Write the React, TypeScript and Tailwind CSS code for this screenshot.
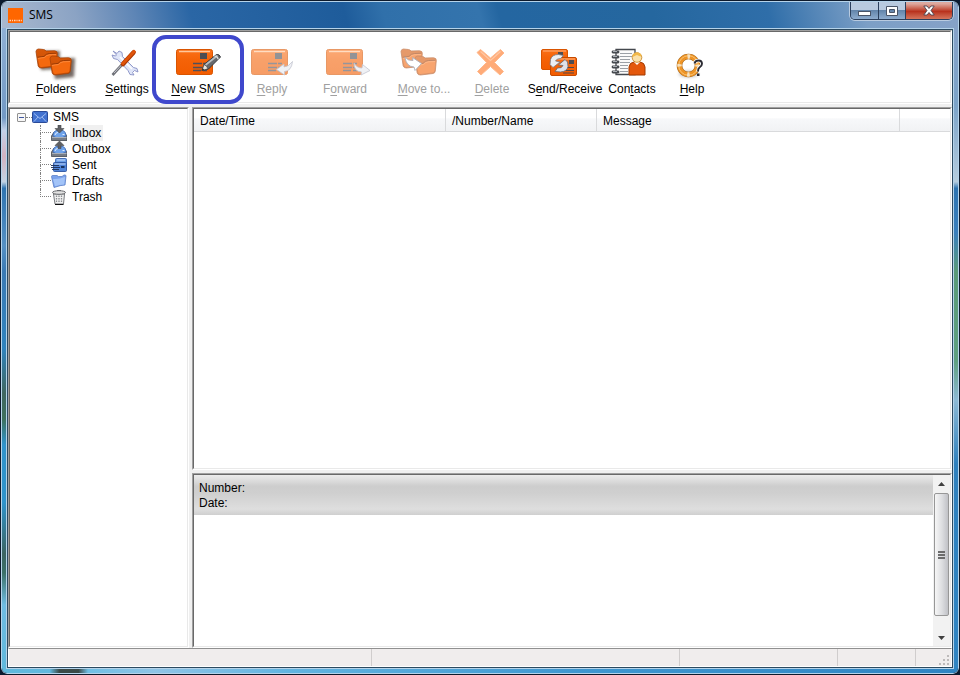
import type { ReactNode } from "react";
import clsx from "clsx";

interface ToolbarItem {
  id: string;
  label: string;
  // index of the underlined access key inside the label
  accessKey: number;
  width: string;
  icon: ReactNode;
  disabled?: boolean;
  highlighted?: boolean;
}

interface SunkenProps {
  className?: string;
  children?: ReactNode;
}

function Sunken({ className, children }: SunkenProps) {
  return (
    <div className={clsx("flex border border-t-[#a0a0a0] border-l-[#a0a0a0] border-r-white border-b-white", className)}>
      <div className="flex min-w-0 flex-1 flex-col border border-t-[#696969] border-l-[#696969] border-r-[#e9e9e9] border-b-[#e9e9e9] bg-white">
        {children}
      </div>
    </div>
  );
}

/* ---------- toolbar icons ---------- */

function Envelope({ x }: { x: number }) {
  return (
    <g transform={`translate(${x} 5)`}>
      <rect x="0.5" y="0.5" width="36" height="25" rx="2" fill="url(#orange)" stroke="#d95400" />
      <path d="M3 2.500H34" stroke="#ffc79c" strokeWidth="1.400" />
      <rect x="24" y="4" width="7" height="6" fill="#4d4d52" />
      <path d="M17 14.500h9m1 0h4M17 18.500h9m1 0h4M17 21.500h8m2 0h4" stroke="#50505a" strokeWidth="1.300" />
    </g>
  );
}

function FolderShape({ x, y }: { x: number; y: number }) {
  return (
    <g transform={`translate(${x} ${y})`}>
      <path
        d="M1 3.500Q1.300 1 3.500 1L8.500 1.500Q10 1.700 11 3L19.500 2.800Q22.500 3 22.300 5.500L21.300 16Q21 18.300 19 18.500L6.500 20Q4 20.200 3.200 18Z"
        fill="url(#folder)"
        stroke="#a84208"
        strokeWidth="0.800"
      />
      <path
        d="M2.500 9.500Q6.500 8.800 9 8.600Q11 6 14.500 5.800L21.500 5.500L20.500 15.500Q20.300 17.300 18.500 17.500L6.500 19Q4.800 19 4.300 17.500Z"
        fill="#f4690f"
      />
      <path d="M2.500 9.300Q6.500 8.600 9 8.400Q11 5.700 14.500 5.500L21.500 5.200" fill="none" stroke="#8e3604" strokeWidth="0.900" />
      <path d="M3 10.500Q7 9.700 9.500 9.500Q11.500 7 14.500 6.800L21 6.500" fill="none" stroke="#ff9a55" strokeWidth="0.600" />
    </g>
  );
}

function FoldersIcon() {
  return (
    <g>
      <g fill="#3a2a20" opacity="0.7" filter="url(#soft)">
        <path d="M6 7L28 7L27 25L9 26Z" />
        <path d="M20 15L43 14L42 33L23 35Z" />
      </g>
      <FolderShape x={3} y={4} />
      <FolderShape x={17} y={11} />
    </g>
  );
}

function SettingsIcon() {
  return (
    <g>
      <path
        d="M10 7L14 9.500L16 7L19 8.500L19.500 12.500L30.500 23.500L34 24.500L35 28L31.500 26.500L29.500 28.500L31 31L27 30.500L25 26.500L14.500 15.500L10.500 14.500L9 11L12.500 12L13.500 11Z"
        fill="#dfe5f8"
        stroke="#8790c4"
        strokeWidth="0.900"
      />
      <path d="M17 13L29 25" stroke="#fff" strokeWidth="1.500" />
      <path d="M9.500 31L20 19.500" stroke="#6f7178" strokeWidth="2.600" />
      <path d="M11 29L20 19.500" stroke="#c9cbd4" strokeWidth="0.900" />
      <path d="M20 20L30.500 8.500" stroke="#a93600" strokeWidth="4.600" strokeLinecap="round" />
      <path d="M20 19.500L31 7.500" stroke="#e0540a" strokeWidth="3" strokeLinecap="square" />
    </g>
  );
}

function NewSmsIcon() {
  return (
    <g>
      <Envelope x={2} />
      <path d="M28 26.500L30 20.500L42.500 10.500Q45.500 10 46.500 13L34.500 25Z" fill="#66696d" stroke="#36383c" strokeWidth="1" />
      <path d="M31.500 21L43.500 11.500" stroke="#b9bdc0" strokeWidth="1.600" />
      <path d="M28 26.500L30 20.500Q33 21.500 34 24.800Z" fill="#e7e5df" stroke="#444" strokeWidth="0.700" />
      <path d="M28 26.500L28.700 24.300L30.200 25.700Z" fill="#222" />
      <path d="M40.500 12.200Q43.500 12.500 44.300 15.300" fill="none" stroke="#dcdcdc" strokeWidth="1.200" />
    </g>
  );
}

function ReplyIcon() {
  return (
    <g>
      <Envelope x={3} />
      <path
        d="M28.500 25.500L36 20V23Q41 22.500 44.500 17.500Q43.500 27 36.500 27.500V31Z"
        fill="#e6e8f0"
        stroke="#9a9eb0"
        strokeWidth="0.800"
      />
    </g>
  );
}

function ForwardIcon() {
  return (
    <g>
      <Envelope x={5} />
      <path
        d="M33 19Q35.500 24 41 24L41.500 20.500L49 26.500L40 31L40.500 28Q33 27.500 33 19Z"
        fill="#e6e8f0"
        stroke="#9a9eb0"
        strokeWidth="0.800"
      />
    </g>
  );
}

function MoveIcon() {
  return (
    <g>
      <FolderShape x={0} y={4} />
      <FolderShape x={14} y={11} />
      <path
        d="M5 13Q8 17 13 16.500L12.500 13.500L21.500 19.500L15 26.500L14 23Q6 22.500 5 13Z"
        fill="#fff"
        stroke="#777b8c"
        strokeWidth="0.900"
      />
    </g>
  );
}

function DeleteIcon() {
  return (
    <g>
      <path
        d="M9 8.500L12.500 5.500L22.500 14L32.500 5.500L36 9L26.500 18.500L35.500 27.500L32 31L22.500 22.500L13 31L9.500 27.500L18.500 18.500Z"
        fill="#ff7420"
        stroke="#ff8a40"
        strokeLinejoin="round"
      />
      <path d="M12.500 7.500L22.500 16.500L32.500 7.500" fill="none" stroke="#ffa468" strokeWidth="1.200" />
    </g>
  );
}

function SendReceiveIcon() {
  return (
    <g>
      <rect x="0.500" y="5.500" width="26" height="20" rx="1.500" fill="url(#orange)" stroke="#d95400" />
      <path d="M2 7H25" stroke="#ffb17c" />
      <rect x="17" y="8" width="5" height="4" fill="#4d4d52" />
      <rect x="9.500" y="13.500" width="26" height="18" rx="1.500" fill="url(#orange)" stroke="#c54a00" />
      <path d="M11 15H34" stroke="#ffb17c" />
      <rect x="28" y="16" width="5" height="4" fill="#4d4d52" />
      <path d="M25 23.500H33M24 26.500H33M22 29H33" stroke="#55484a" strokeWidth="1.200" />
      <path
        d="M9 20.500L9.500 15.500Q11 10.500 17.500 10.500L22.500 11.500L19.500 14.500Q15.500 14.500 14.500 17L19 18L12 23.500Z"
        fill="#eceef2"
        stroke="#777b85"
        strokeWidth="0.800"
      />
      <path
        d="M26.500 18L27 22.500Q26 27.500 19.500 28L14 27.500L16.500 24Q21 24.500 22 21.500L17.500 21L24 15.500Z"
        fill="#dfe2e8"
        stroke="#666a74"
        strokeWidth="0.800"
      />
    </g>
  );
}

function ContactsIcon() {
  return (
    <g>
      <path d="M8 5.500H27V30.500H8Z" fill="#fafafa" stroke="#44484e" strokeWidth="1.300" />
      <path d="M12 9.500H24M12 12.500H24M12 15.500H22M12 18.500H22M12 21.500H20M12 24.500H20M12 27.500H20" stroke="#9ba0a6" />
      <path d="M5 8H10M5 13H10M5 18H10M5 23H10M5 28H10" stroke="#474b50" strokeWidth="2.800" strokeLinecap="round" />
      <path d="M5 7.500H9M5 12.500H9M5 17.500H9M5 22.500H9M5 27.500H9" stroke="#b5babf" strokeWidth="0.900" />
      <path d="M21 31V23Q21.500 18.500 26 18H32Q36.500 18.500 37 23V31Z" fill="#e4580c" stroke="#a33a00" />
      <path d="M26 18L29 21L32 18Z" fill="#fff" />
      <circle cx="29" cy="13.500" r="4.800" fill="#fbe0a8" stroke="#c98a2a" strokeWidth="0.900" />
      <path d="M24.500 13Q24.500 8.500 29 8.500Q33.500 8.500 33.500 12.500Q31 12 29 11Q26.500 12 24.500 13Z" fill="#f2b848" />
    </g>
  );
}

function HelpIcon() {
  return (
    <g>
      <ellipse cx="20.500" cy="30" rx="10" ry="3.500" fill="#3a2a20" opacity="0.25" filter="url(#soft)" />
      <circle cx="20.500" cy="21.500" r="9" fill="none" stroke="#a8681c" strokeWidth="5.600" />
      <circle cx="20.500" cy="21.500" r="9" fill="none" stroke="#ee9426" strokeWidth="4.400" />
      <circle cx="20.500" cy="21.500" r="9.800" fill="none" stroke="#f9c374" strokeWidth="1" />
      {/* light bands at the four poles of the ring */}
      <circle
        cx="20.500"
        cy="21.500"
        r="9"
        fill="none"
        stroke="#f6e2c0"
        strokeWidth="4.400"
        strokeDasharray="2.600 11.537"
        strokeDashoffset="1.300"
      />
      <path
        d="M26.500 19.500Q27 16.500 30.500 16.500Q34 16.500 34 19.800Q34 22 31.500 23.500Q30 24.500 30 27.500"
        fill="none"
        stroke="#fff"
        strokeWidth="3.600"
      />
      <path
        d="M26.500 19.500Q27 16.500 30.500 16.500Q34 16.500 34 19.800Q34 22 31.500 23.500Q30 24.500 30 27.500"
        fill="none"
        stroke="#2c2c34"
        strokeWidth="1.900"
      />
      <rect x="29" y="29.500" width="2.500" height="2.500" fill="#2c2c34" />
    </g>
  );
}

const toolbarItems: ToolbarItem[] = [
  { id: "folders", label: "Folders", accessKey: 0, width: "w-[92px]", icon: <FoldersIcon /> },
  { id: "settings", label: "Settings", accessKey: 0, width: "w-[50px]", icon: <SettingsIcon /> },
  { id: "new", label: "New SMS", accessKey: 0, width: "w-[92px]", icon: <NewSmsIcon />, highlighted: true },
  { id: "reply", label: "Reply", accessKey: 0, width: "w-[56px]", icon: <ReplyIcon />, disabled: true },
  { id: "forward", label: "Forward", accessKey: 1, width: "w-[90px]", icon: <ForwardIcon />, disabled: true },
  { id: "move", label: "Move to...", accessKey: 0, width: "w-[68px]", icon: <MoveIcon />, disabled: true },
  { id: "delete", label: "Delete", accessKey: 0, width: "w-[68px]", icon: <DeleteIcon />, disabled: true },
  { id: "sendreceive", label: "Send/Receive", accessKey: 1, width: "w-[78px]", icon: <SendReceiveIcon /> },
  { id: "contacts", label: "Contacts", accessKey: 3, width: "w-[56px]", icon: <ContactsIcon /> },
  { id: "help", label: "Help", accessKey: 0, width: "w-[64px]", icon: <HelpIcon /> }
];

function ToolbarButton({ item }: { item: ToolbarItem }) {
  const { label, accessKey } = item;
  return (
    <button
      type="button"
      disabled={item.disabled}
      className={clsx("relative flex shrink-0 flex-col items-center pt-3", item.width)}
    >
      <svg
        viewBox="0 0 48 36"
        className={clsx("h-9 w-12 shrink-0 overflow-visible", item.disabled && "opacity-60")}
        aria-hidden="true"
      >
        {item.icon}
      </svg>
      <span className={clsx("text-xs leading-[18px] whitespace-nowrap", item.disabled ? "text-[#a0a0a0]" : "text-black")}>
        {label.slice(0, accessKey)}
        <u className="underline-offset-2">{label[accessKey]}</u>
        {label.slice(accessKey + 1)}
      </span>
      {item.highlighted && (
        <span className="pointer-events-none absolute inset-x-0 top-[3px] -bottom-[2px] rounded-[14px] border-4 border-[#3f48cc]" />
      )}
    </button>
  );
}

function Toolbar() {
  return (
    <Sunken className="h-[74px] shrink-0">
      <div className="flex flex-1">
        {toolbarItems.map((item) => (
          <ToolbarButton key={item.id} item={item} />
        ))}
      </div>
    </Sunken>
  );
}

/* ---------- folder tree ---------- */

function TrayIcon({ up }: { up?: boolean }) {
  return (
    <>
      <path d="M.5 11L3 7H13L16 11V15.500H.5Z" fill="#767c86" stroke="#454a52" strokeWidth="0.800" />
      <path d="M2 11Q2 6.500 5 5.500H12Q15 6.500 15 11L11.500 12.500H5Z" fill="#6fa3ea" stroke="#3c68b4" strokeWidth="0.800" />
      <path d="M4 10Q4.500 7.500 7 7.500M11.500 9.500H13.500" stroke="#e2eeff" fill="none" />
      <path d="M1 12.500H15.500" stroke="#a9afb8" />
      <path
        d={up ? "M8.500 0L13 4.500H10V7.500H7V4.500H4Z" : "M7 0H10V3.500H13L8.500 8L4 3.500H7Z"}
        fill="#5e6064"
        stroke="#44464a"
        strokeWidth="0.600"
      />
    </>
  );
}

function SentIcon() {
  return (
    <>
      <rect x="4.500" y="1.500" width="11" height="9" rx="1" fill="#6b9fe8" stroke="#3a64b0" strokeWidth="0.900" />
      <rect x="2.500" y="5.500" width="13" height="9" rx="1" fill="#4f84d8" stroke="#2c549e" strokeWidth="0.900" />
      <path d="M3.500 7H14.500M6 3H14" stroke="#c5dbfb" />
      <path d="M0 8.500H8M0 10.500H9M1 12.500H8" stroke="#1d2f55" strokeWidth="0.900" />
      <path d="M10 10H13.500" stroke="#17315f" strokeWidth="2" />
    </>
  );
}

function DraftsIcon() {
  return (
    <>
      <path
        d="M.5 3.500Q.5 2.500 2 2.500H6L7.500 3.500H11L13 2Q15 1.500 15 3L14 12Q10 12 3 14.500Z"
        fill="#7ba3ec"
        stroke="#5c80c8"
        strokeWidth="0.800"
      />
      <path d="M2 6Q8 6.500 14 4L13.300 11.500Q9 11.500 4 13.300Z" fill="#a3c4f8" />
    </>
  );
}

function TrashIcon() {
  return (
    <>
      <path d="M2.500 5H13.500L12.500 15H4Z" fill="#f1f1f1" stroke="#77797d" />
      <path d="M5.500 6.500V14M8 6.500V14M10.500 6.500V14" stroke="#8c8e92" strokeDasharray="1.500 1" strokeWidth="1.300" />
      <ellipse cx="8" cy="3.500" rx="6.500" ry="1.800" fill="#e2e2e2" stroke="#66686c" />
      <path d="M6 1.500H10" stroke="#66686c" />
      <path d="M4 15.500H12.500" stroke="#111" />
    </>
  );
}

const folders = [
  { name: "Inbox", icon: <TrayIcon />, selected: true },
  { name: "Outbox", icon: <TrayIcon up /> },
  { name: "Sent", icon: <SentIcon /> },
  { name: "Drafts", icon: <DraftsIcon /> },
  { name: "Trash", icon: <TrashIcon /> }
];

function FolderTree() {
  return (
    <Sunken className="w-[181px] shrink-0">
      <ul className="text-xs leading-4 text-black" role="tree">
        <li role="treeitem" aria-expanded="true">
          <div className="flex h-4 items-center pl-[7px]">
            <button
              type="button"
              aria-label="Collapse SMS"
              className="flex h-[9px] w-[9px] items-center justify-center rounded-[1px] border border-[#919191] bg-[#f7f7f7]"
            >
              <span className="h-px w-[5px] bg-[#3f57a0]" />
            </button>
            <span className="w-[6px] border-t border-dotted border-[#808080]" />
            <svg viewBox="0 0 16 16" className="h-4 w-4" aria-hidden="true">
              <rect x="0.500" y="2.500" width="15" height="11" rx="1" fill="#4272d0" stroke="#2a4a98" />
              <path d="M2 4.500L8 9.500L14 4.500M2 12.500L6 8M14 12.500L10 8" fill="none" stroke="#a8c4f4" strokeWidth="0.900" />
            </svg>
            <span className="pl-[5px]">SMS</span>
          </div>
          <ul role="group" className="pl-[30px]">
            {folders.map((folder, i) => (
              <li key={folder.name} role="treeitem" aria-selected={!!folder.selected} className="flex h-4">
                <span className="flex w-[11px] flex-col">
                  <span className="h-2 border-b border-l border-dotted border-[#808080]" />
                  {i < folders.length - 1 && <span className="h-2 border-l border-dotted border-[#808080]" />}
                </span>
                <svg viewBox="0 0 16 16" className="h-4 w-4" aria-hidden="true">
                  {folder.icon}
                </svg>
                <span className={clsx("ml-[3px] px-[2px]", folder.selected && "bg-[#f0f0f0]")}>{folder.name}</span>
              </li>
            ))}
          </ul>
        </li>
      </ul>
    </Sunken>
  );
}

/* ---------- message list and preview ---------- */

const columns = [
  { title: "Date/Time", width: "w-[252px]" },
  { title: "/Number/Name", width: "w-[151px]" },
  { title: "Message", width: "w-[303px]" }
];

function MessageList() {
  return (
    <Sunken className="min-h-0 flex-1">
      <table className="w-full table-fixed border-separate border-spacing-0 text-xs text-black">
        <thead>
          <tr className="h-[23px]">
            {columns.map((col) => (
              <th
                key={col.title}
                scope="col"
                className={clsx(
                  "border-r border-b border-[#d9dadc] bg-linear-to-b from-white from-40% via-[#f7f8fa] via-45% to-[#f1f2f4] pt-0.5 pb-0 pl-1.5 text-left font-normal",
                  col.width
                )}
              >
                {col.title}
              </th>
            ))}
            <td className="border-b border-[#d9dadc] bg-linear-to-b from-white from-40% via-[#f7f8fa] via-45% to-[#f1f2f4] p-0" />
          </tr>
        </thead>
      </table>
    </Sunken>
  );
}

function ScrollBar() {
  return (
    <div className="flex w-[17px] shrink-0 flex-col bg-[#f2f2f2]">
      <button type="button" aria-label="Scroll up" className="flex h-[18px] items-center justify-center">
        <svg viewBox="0 0 7 4" className="h-1 w-[7px]">
          <path d="M0 4L3.500 0L7 4Z" fill="#404040" />
        </svg>
      </button>
      <div className="mx-px flex h-[123px] flex-col items-center justify-center gap-px rounded-[2px] border border-[#979797] bg-linear-to-r from-[#f6f6f6] via-[#dcdde0] via-55% to-[#c0c1c6]">
        <span className="h-[2px] w-[7px] bg-[#6c6c6c]" />
        <span className="h-[2px] w-[7px] bg-[#6c6c6c]" />
        <span className="h-[2px] w-[7px] bg-[#6c6c6c]" />
      </div>
      <button type="button" aria-label="Scroll down" className="mt-auto flex h-[17px] items-center justify-center">
        <svg viewBox="0 0 7 4" className="h-1 w-[7px]">
          <path d="M0 0L3.500 4L7 0Z" fill="#404040" />
        </svg>
      </button>
    </div>
  );
}

function Preview() {
  return (
    <Sunken className="h-[175px] shrink-0">
      <div className="flex flex-1">
        <div className="flex-1">
          <div className="h-10 bg-[linear-gradient(to_bottom,#ececec_0%,#cdcdcd_28%,#cfcfcf_45%,#dedede_85%,#cfcfcf_100%)] pt-1.5 pl-[5px] text-xs leading-[15px] text-black">
            <p>Number:</p>
            <p>Date:</p>
          </div>
        </div>
        <ScrollBar />
      </div>
    </Sunken>
  );
}

function StatusBar() {
  return (
    <footer className="flex h-[19px] shrink-0 border border-t-[#909090] border-r-white border-b-white border-l-white bg-[#f0eded]">
      <div className="w-[363px] border-r border-[#d0cdcd]" />
      <div className="w-[308px] border-r border-[#d0cdcd]" />
      <div className="w-[158px] border-r border-[#d0cdcd]" />
      <div className="w-[78px] border-r border-[#d0cdcd]" />
      <svg viewBox="0 0 12 12" className="mt-auto ml-auto h-3 w-3" aria-hidden="true">
        <path
          d="M8 1h2v2h-2zM4 5h2v2h-2zM8 5h2v2h-2zM0 9h2v2h-2zM4 9h2v2h-2zM8 9h2v2h-2z"
          fill="#bdbaba"
        />
      </svg>
    </footer>
  );
}

/* ---------- window frame ---------- */

function TitleBar() {
  return (
    <header className="flex h-[26px] shrink-0 items-start bg-[linear-gradient(75deg,#a9b9cf_0%,#8ba3c4_8%,#5f86b6_14%,#2a66a5_20%,#1e5c9b_36%,#3070aa_40%,#3474ad_50%,#2466a1_52%,#25679f_68%,#2f6ea9_80%,#7c9fc6_90%,#86a2c8_100%)]">
      <div className="flex flex-1 items-center gap-1.5 pt-[5px] pl-1.5">
        <svg viewBox="0 0 15 15" className="h-[15px] w-[15px]" aria-hidden="true">
          <rect width="15" height="15" fill="#ff6600" />
          <path
            d="M1.500 12.500h1.500M4 12.500h1M6 12.500h1.500M8.500 12.500h1M10.500 12.500h1.500M12.800 12.500h1"
            stroke="#ffd8bd"
            strokeWidth="1.400"
          />
        </svg>
        <h1 className="font-['Open_Sans',sans-serif] text-xs leading-4 text-black">SMS</h1>
      </div>
      <div className="mr-[5px] flex h-[18px] overflow-hidden rounded-b-[5px] border border-t-0 border-[#2b3f5c] shadow-[0_0_0_1px_#b9cbe0]">
        <button
          type="button"
          aria-label="Minimize"
          className="flex w-7 items-center justify-center border-r border-[#2b3f5c] bg-linear-to-b from-[#b9cadf] from-45% via-[#6385ab] via-50% to-[#8eacce]"
        >
          <svg viewBox="0 0 13 12" className="h-3 w-[13px]">
            <rect x="0.500" y="6.500" width="12" height="4" fill="#fff" stroke="#4a5568" />
          </svg>
        </button>
        <button
          type="button"
          aria-label="Maximize"
          className="flex w-[27px] items-center justify-center border-r border-[#2b3f5c] bg-linear-to-b from-[#b9cadf] from-45% via-[#6385ab] via-50% to-[#8eacce]"
        >
          <svg viewBox="0 0 12 12" className="h-3 w-3">
            <path
              d="M.5 1.500H11.500V10.500H.5ZM3.500 4.500V7.500H8.500V4.500Z"
              fill="#fff"
              fillRule="evenodd"
              stroke="#4a5568"
            />
          </svg>
        </button>
        <button
          type="button"
          aria-label="Close"
          className="flex w-[46px] items-center justify-center bg-linear-to-b from-[#dda99f] from-10% via-[#b8301c] via-55% to-[#d4745c]"
        >
          <svg viewBox="0 0 12 11" className="h-[11px] w-3">
            <path
              d="M.8 1H4L6 3.500L8 1H11.200L8 5.500L11.200 10H8L6 7.500L4 10H.8L4 5.500Z"
              fill="#fff"
              stroke="#4a4450"
              strokeWidth="0.900"
            />
          </svg>
        </button>
      </div>
    </header>
  );
}

function SharedDefs() {
  return (
    <svg className="absolute h-0 w-0" aria-hidden="true">
      <defs>
        <linearGradient id="orange" x1="0" y1="0" x2="0" y2="1">
          <stop offset="0" stopColor="#fb7018" />
          <stop offset="0.400" stopColor="#f56308" />
          <stop offset="1" stopColor="#f25c00" />
        </linearGradient>
        <linearGradient id="folder" x1="0" y1="0" x2="0" y2="1">
          <stop offset="0" stopColor="#d85808" />
          <stop offset="1" stopColor="#c94f06" />
        </linearGradient>
        <filter id="soft" x="-30%" y="-30%" width="160%" height="160%">
          <feGaussianBlur stdDeviation="1.800" />
        </filter>
      </defs>
    </svg>
  );
}

export default function App() {
  return (
    <div className="flex h-screen bg-[#0b1a30] font-['Liberation_Sans',Arial,sans-serif]">
      <SharedDefs />
      <div className="flex min-w-0 flex-1 flex-col overflow-hidden rounded-[7px] border border-[#0d1a2c]">
        <div className="flex min-h-0 flex-1 flex-col overflow-hidden rounded-[6px] border border-[#b5d3ea]">
          <TitleBar />
          <div className="flex min-h-0 flex-1">
            <div className="w-1 shrink-0 bg-[linear-gradient(to_bottom,#8fb0d4_0%,#7299c4_14%,#c4d2e8_16%,#d3b2c0_20%,#c3d3e2_24%,#2e74b0_25%,#5590c4_34%,#3a7ab4_38%,#2f83bd_50%,#3f6660_57%,#3d705c_61%,#3093cb_65%,#2f93cb_74%,#3b6462_82%,#3b7068_85%,#6fbce2_90%,#5fb8dc_100%)]" />
            <main className="flex min-w-0 flex-1 flex-col border border-[#b5d3ea]">
              <div className="flex min-h-0 flex-1 flex-col border border-[#2c4a60] bg-[#f0f0f0]">
                <Toolbar />
                <div className="mt-[3px] flex min-h-0 flex-1 gap-[3px]">
                  <FolderTree />
                  <div className="flex min-w-0 flex-1 flex-col gap-[3px]">
                    <MessageList />
                    <Preview />
                  </div>
                </div>
                <StatusBar />
              </div>
            </main>
            <div className="w-1 shrink-0 bg-[linear-gradient(to_bottom,#86a2c8_0%,#7ba3c8_12%,#b5ccdd_24%,#2e74b0_25%,#3a7fbc_32%,#5a9a78_38%,#5fa080_52%,#8db9d4_58%,#2e80bd_68%,#2f84c2_100%)]" />
          </div>
          <div className="h-1 shrink-0 bg-[linear-gradient(to_right,#5fb8dc_0%,#62b8de_5%,#3b4a48_6%,#3b4a48_8%,#70bfe4_9%,#8fc4e6_16%,#62b4e0_30%,#3f97d0_60%,#2f84c2_100%)]" />
        </div>
      </div>
    </div>
  );
}
